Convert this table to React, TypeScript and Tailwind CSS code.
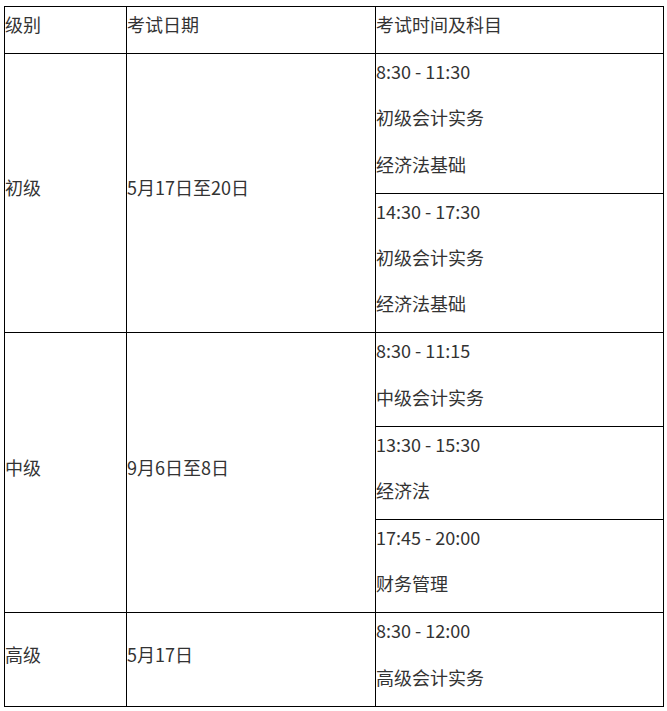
import React from "react";

type Slot = { time: string; subjects: string[] };
type Level = { name: string; date: string; slots: Slot[] };

const levels: Level[] = [
  {
    name: "初级",
    date: "5月17日至20日",
    slots: [
      { time: "8:30 - 11:30", subjects: ["初级会计实务", "经济法基础"] },
      { time: "14:30 - 17:30", subjects: ["初级会计实务", "经济法基础"] },
    ],
  },
  {
    name: "中级",
    date: "9月6日至8日",
    slots: [
      { time: "8:30 - 11:15", subjects: ["中级会计实务"] },
      { time: "13:30 - 15:30", subjects: ["经济法"] },
      { time: "17:45 - 20:00", subjects: ["财务管理"] },
    ],
  },
  {
    name: "高级",
    date: "5月17日",
    slots: [{ time: "8:30 - 12:00", subjects: ["高级会计实务"] }],
  },
];

const Line: React.FC<{ children: React.ReactNode }> = ({ children }) => (
  <p className="pt-[4px] pb-[15.2px] leading-[27px] whitespace-nowrap">{children}</p>
);

const cell = "border border-black p-0 align-middle text-left";

export default function App() {
  return (
    <div
      className="bg-white min-h-[711px] pt-[6px] pl-[4px] text-[18px] text-[#333]"
      style={{ fontFamily: '"Noto Sans CJK SC", "Noto Sans", sans-serif' }}
    >
      <table className="border-collapse table-fixed w-[659px]">
        <colgroup>
          <col className="w-[122px]" />
          <col className="w-[249px]" />
          <col className="w-[288px]" />
        </colgroup>
        <thead>
          <tr>
            <th className={`${cell} font-normal align-top`}>
              <Line>级别</Line>
            </th>
            <th className={`${cell} font-normal align-top`}>
              <Line>考试日期</Line>
            </th>
            <th className={`${cell} font-normal align-top`}>
              <Line>考试时间及科目</Line>
            </th>
          </tr>
        </thead>
        <tbody>
          {levels.map((level) =>
            level.slots.map((slot, i) => (
              <tr key={`${level.name}-${i}`}>
                {i === 0 && (
                  <>
                    <td className={cell} rowSpan={level.slots.length}>
                      <Line>{level.name}</Line>
                    </td>
                    <td className={cell} rowSpan={level.slots.length}>
                      <Line>{level.date}</Line>
                    </td>
                  </>
                )}
                <td className={`${cell} align-top`}>
                  <Line>{slot.time}</Line>
                  {slot.subjects.map((s) => (
                    <Line key={s}>{s}</Line>
                  ))}
                </td>
              </tr>
            ))
          )}
        </tbody>
      </table>
    </div>
  );
}
